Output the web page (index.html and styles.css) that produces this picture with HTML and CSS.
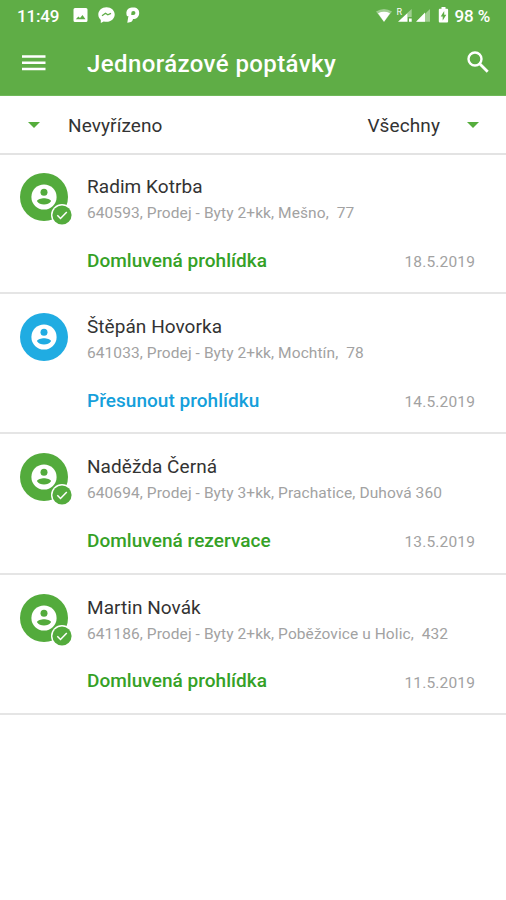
FILE: index.html
```html
<!DOCTYPE html>
<html lang="cs">
<head>
<meta charset="utf-8">
<title>Jednorázové poptávky</title>
<link rel="stylesheet" href="styles.css">
</head>
<body>
<svg class="defs" aria-hidden="true">
  <symbol id="person" viewBox="0 0 48 48">
    <circle cx="24" cy="24" r="24" fill="currentColor"/>
    <circle cx="24" cy="24" r="12.600" fill="#fff"/>
    <circle cx="24" cy="19.300" r="3.500" fill="currentColor"/>
    <path d="M17 28.300c0-2.200 4.500-3.100 7-3.100s7 .9 7 3.100c-1.500 2.200-4.100 3.100-7 3.100s-5.500-.9-7-3.100z" fill="currentColor"/>
  </symbol>
  <symbol id="check" viewBox="0 0 22 22">
    <circle cx="11" cy="11" r="11" fill="#fff"/>
    <circle cx="11" cy="11" r="9.600" fill="currentColor"/>
    <path d="M6.300 11.300l3.200 3.200 6.300-6.600" fill="none" stroke="#fff" stroke-width="1.500"/>
  </symbol>
</svg>
<header class="header">
  <div class="status">
    <span class="clock">11:49</span>
    <svg class="notices" width="68" height="18" viewBox="0 0 68 18" fill="#fff">
      <path fill-rule="evenodd" d="M3 1h11a1.500 1.500 0 0 1 1.500 1.500v11A1.500 1.500 0 0 1 14 15H3a1.500 1.500 0 0 1-1.500-1.500v-11A1.500 1.500 0 0 1 3 1zM3.800 12.300h9.700l-3-4.300-2.500 3.100-1.600-1.700z"/>
      <path d="M34.500.2c-4.700 0-8.200 3.200-8.200 7.300 0 2.300 1 4.200 2.500 5.400V16l2.900-1.600c.9.300 1.800.4 2.800.4 4.700 0 8.200-3.200 8.200-7.300S39.200.2 34.500.2z"/>
      <path d="M30 8.800l3.500-2.500 2.300 1.500 3.200-1.500" fill="none" stroke="#5fad46" stroke-width="1.300"/>
      <path fill-rule="evenodd" d="M56 2C57.500 1 59.500.6 61.300.6c3.600 0 5.900 2 5.900 5.300 0 3.600-2.600 6.200-6.200 6.200-.4 2.200-1.600 3.600-5.700 3.600l1.100-6.700-1.400.3c-1-2.800-.9-5.700 1-7.300zM61.400 3.900a2.200 2.200 0 0 0-2.100 2.300v1.900h2a2.100 2.100 0 0 0 .1-4.200z"/>
    </svg>
    <svg class="signals" width="74" height="20" viewBox="0 0 74 20" fill="#fff">
      <path opacity=".4" d="M0 5.500Q8 .5 16 5.500L8 16z"/>
      <path d="M2 7.200Q8 4.500 14 7.200L8 15.700z"/>
      <text x="20.500" y="8.500" class="roam">R</text>
      <path opacity=".4" d="M35.700 3v8h-4.200V6.700zM54 15.700V3L41 15.700z"/>
      <path d="M22 15.700L31.500 7v8.700zM33 12.600h2.700v3.100H33zM40 15.700L49 6.500v9.200z"/>
      <path fill-rule="evenodd" d="M65.500 1h4v1.700h1.300c.9 0 1.300.5 1.300 1.300v11.200c0 .8-.4 1.300-1.300 1.300h-6.700c-.8 0-1.300-.5-1.300-1.300V4c0-.8.5-1.300 1.300-1.300h1.400zM68.200 5l-3.500 5.400h2v4l3.600-5.600h-2.100z"/>
    </svg>
    <span class="battery">98 %</span>
  </div>
  <div class="bar">
    <svg class="menu" width="24" height="16" viewBox="0 0 24 16"><path d="M0 1.500h23.500M0 7.700h23.500M0 14h23.500" stroke="#fff" stroke-width="2.400"/></svg>
    <h1 class="title">Jednorázové poptávky</h1>
    <svg class="search" width="22" height="22" viewBox="0 0 22 22" fill="none" stroke="#fff"><circle cx="8" cy="8" r="6.500" stroke-width="2.400"/><path d="M12.700 12.700l8 8" stroke-width="2.800"/></svg>
  </div>
</header>
<nav class="filters">
  <span class="arrow"></span><span class="state">Nevyřízeno</span><span class="scope">Všechny</span><span class="arrow"></span>
</nav>
<main class="list">
  <article class="item">
    <div class="avatar green"><svg class="face"><use href="#person"/></svg><svg class="badge"><use href="#check"/></svg></div>
    <div class="info">
      <h2 class="name">Radim Kotrba</h2>
      <p class="detail">640593, Prodej - Byty 2+kk, Mešno,&nbsp; 77</p>
      <div class="foot"><span class="action green">Domluvená prohlídka</span><time class="date">18.5.2019</time></div>
    </div>
  </article>
  <article class="item">
    <div class="avatar blue"><svg class="face"><use href="#person"/></svg></div>
    <div class="info">
      <h2 class="name">Štěpán Hovorka</h2>
      <p class="detail">641033, Prodej - Byty 2+kk, Mochtín,&nbsp; 78</p>
      <div class="foot"><span class="action blue">Přesunout prohlídku</span><time class="date">14.5.2019</time></div>
    </div>
  </article>
  <article class="item">
    <div class="avatar green"><svg class="face"><use href="#person"/></svg><svg class="badge"><use href="#check"/></svg></div>
    <div class="info">
      <h2 class="name">Naděžda Černá</h2>
      <p class="detail">640694, Prodej - Byty 3+kk, Prachatice, Duhová 360</p>
      <div class="foot"><span class="action green">Domluvená rezervace</span><time class="date">13.5.2019</time></div>
    </div>
  </article>
  <article class="item">
    <div class="avatar green"><svg class="face"><use href="#person"/></svg><svg class="badge"><use href="#check"/></svg></div>
    <div class="info">
      <h2 class="name">Martin Novák</h2>
      <p class="detail">641186, Prodej - Byty 2+kk, Poběžovice u Holic,&nbsp; 432</p>
      <div class="foot"><span class="action green">Domluvená prohlídka</span><time class="date">11.5.2019</time></div>
    </div>
  </article>
</main>
</body>
</html>
```
FILE: styles.css
```css
* { box-sizing: border-box; }
body { margin: 0; min-height: 900px; background: #fff; font-family: Roboto, sans-serif; color: #333; }
h1, h2, p { margin: 0; }
svg { display: block; flex: none; }
.defs { width: 0; height: 0; position: absolute; }
.header { height: 96px; background: #5fad46; color: #fff; border-bottom: 1px solid #6fb859; }
.status { display: flex; height: 31px; padding: 0 16px 0 17px; align-items: center; font-size: 17px; font-weight: 500; letter-spacing: -.15px; white-space: nowrap; }
.clock { width: 55px; }
.notices { margin-top: 1px; }
.signals { margin-left: auto; margin-right: 5px; }
.roam { font-size: 9px; font-weight: 400; }
.bar { display: flex; height: 64px; align-items: center; padding: 0 17px 0 22px; }
.menu { margin-right: 41px; }
.title { font-size: 24px; font-weight: 500; letter-spacing: .4px; line-height: 30px; white-space: nowrap; padding-top: 1px; }
.search { margin-left: auto; margin-top: -2px; }
.filters { display: flex; height: 59px; align-items: center; padding: 3px 27px 0 28px; border-bottom: 2px solid #e3e3e3; font-size: 19px; line-height: 24px; letter-spacing: .1px; }
.arrow { border: 6px solid transparent; border-top-color: #55ad3c; border-bottom: 0; margin-top: -2px; }
.state { margin-left: 28px; }
.scope { margin-left: auto; margin-right: 27px; }
.item { display: flex; height: 140.200px; padding: 18px 31px 0 20px; border-bottom: 2px solid #e5e5e5; }
.list { margin-top: -1px; }
.avatar { position: relative; width: 48px; height: 48px; margin-right: 19px; margin-top: 1px; flex: none; }
.green { color: #53ab3c; }
.blue { color: #20ace2; }
.face { width: 48px; height: 48px; }
.badge { position: absolute; left: 31px; top: 31px; width: 22px; height: 22px; }
.info { flex: 1; min-width: 0; }
.name { font-size: 19px; line-height: 24px; font-weight: 400; letter-spacing: .05px; margin-top: 3px; }
.detail { font-size: 15.500px; line-height: 20px; margin-top: 4px; color: #a2a2a2; white-space: nowrap; letter-spacing: .08px; }
.foot { display: flex; justify-content: space-between; align-items: center; height: 26px; margin-top: 24px; }
.action { font-size: 19px; font-weight: 500; letter-spacing: .04px; }
.action.green { color: #35a126; }
.action.blue { color: #159fdb; }
.date { font-size: 15.500px; letter-spacing: .15px; color: #a2a2a2; padding-top: 4px; }
```
